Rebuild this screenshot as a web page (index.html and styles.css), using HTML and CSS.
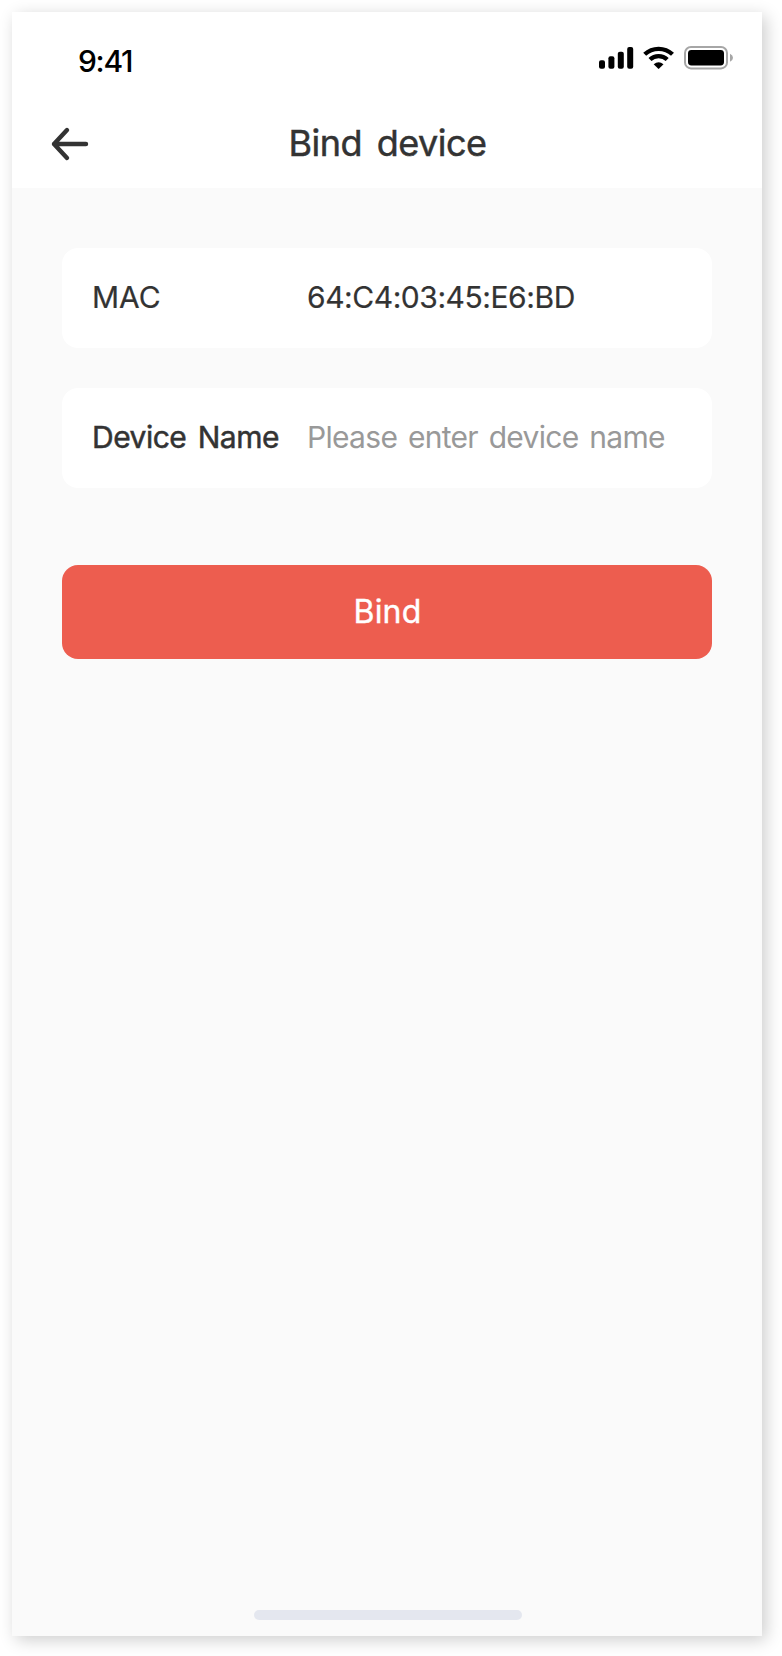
FILE: index.html
```
<!DOCTYPE html>
<html lang="en">
<head>
<meta charset="utf-8">
<title>Bind device</title>
<link rel="stylesheet" href="styles.css">
</head>
<body>
<main class="phone">
  <header class="header">
    <div class="status">
      <span class="time">9:41</span>
      <svg class="indicators" width="136" height="24" viewBox="0 0 136 24">
        <rect x="0" y="14.3" width="6" height="8.4" rx="2"/>
        <rect x="9.4" y="10.3" width="6" height="12.4" rx="2"/>
        <rect x="18.8" y="5.7" width="6" height="17" rx="2"/>
        <rect x="28.2" y="1" width="6" height="21.7" rx="2"/>
        <g fill="none" stroke="#000" stroke-width="4.3">
          <path d="M45.7 8.3A20.3 20.3 0 0 1 73.5 8.3"/>
          <path d="M51 13.5A12.4 12.4 0 0 1 68.2 13.5"/>
        </g>
        <path d="M54.7 18.2Q59.6 14.2 64.5 18.2L60.2 22.6Q59.6 23.2 59 22.6Z"/>
        <rect x="86" y="1" width="42" height="21.4" rx="6" fill="none" stroke="#a6a6a6" stroke-width="2"/>
        <rect x="89" y="4" width="36" height="15.4" rx="3.4"/>
        <path d="M131 7.7Q134 9 134 11.7Q134 14.4 131 15.7Z" fill="#a6a6a6"/>
      </svg>
    </div>
    <div class="nav">
      <svg class="back" width="40" height="36" viewBox="0 0 40 36" fill="none" stroke="#333" stroke-width="4.4" stroke-linecap="round" stroke-linejoin="round">
        <path d="M17 4L4 18L17 32M4 18H36"/>
      </svg>
      <h1 class="title">Bind device</h1>
    </div>
  </header>
  <section class="form">
    <div class="field"><span class="label mac">MAC</span><span class="value">64:C4:03:45:E6:BD</span></div>
    <div class="field"><span class="label">Device Name</span><span class="placeholder">Please enter device name</span></div>
    <button class="bind"><span class="bind-text">Bind</span></button>
  </section>
  <div class="home"></div>
</main>
</body>
</html>
```
FILE: styles.css
```
* { box-sizing: border-box; }
body {
  margin: 0;
  padding: 12px;
  height: 1656px;
  overflow: hidden;
  background: #fff;
  color: #333;
  font-family: Inter, "Liberation Sans", sans-serif;
}
.phone {
  display: flex;
  flex-direction: column;
  width: 750px;
  height: 1624px;
  background: #fafafa;
  box-shadow: 4px 4px 16px rgba(0, 0, 0, 0.2);
}
.header { height: 176px; background: #fff; }
.status {
  display: flex;
  justify-content: space-between;
  align-items: flex-start;
  height: 88px;
  padding: 31px 27px 0 66px;
}
.time {
  color: #000;
  font-size: 30px;
  line-height: 36px;
  font-weight: 500;
  letter-spacing: -1.3px;
}
.indicators { margin-top: 3px; }
.nav {
  display: grid;
  grid-template-columns: 80px 1fr 80px;
  align-items: center;
  height: 88px;
}
.back { margin-left: 38px; }
.title {
  margin: 0;
  padding: 0 0 2px 1px;
  font-size: 36px;
  line-height: 44px;
  font-weight: 400;
  -webkit-text-stroke: 0.5px #333;
  letter-spacing: -0.5px;
  word-spacing: 5px;
  text-align: center;
  white-space: nowrap;
}
.form {
  display: flex;
  flex-direction: column;
  gap: 40px;
  padding: 60px 50px 0;
}
.field {
  display: flex;
  align-items: center;
  height: 100px;
  padding: 0 30px 2px;
  border-radius: 16px;
  background: #fff;
  font-size: 30px;
  white-space: nowrap;
}
.label {
  flex: 0 0 215px;
  font-weight: 400;
  -webkit-text-stroke: 0.5px #333;
  letter-spacing: -0.5px;
  word-spacing: 3.5px;
}
.mac { -webkit-text-stroke-width: 0.2px; letter-spacing: 0; }
.value { letter-spacing: -0.45px; -webkit-text-stroke: 0.2px #333; }
.placeholder {
  color: #999;
  font-weight: 400;
  letter-spacing: -0.7px;
  word-spacing: 3px;
}
.bind {
  height: 94px;
  margin-top: 37px;
  padding: 0 0 1px 1px;
  border: 0;
  border-radius: 16px;
  background: #ed5d4f;
  color: #fff;
  font: 400 32px Inter, "Liberation Sans", sans-serif;
  -webkit-text-stroke: 0.4px #fff;
  letter-spacing: 0.2px;
}
.home {
  width: 268px;
  height: 10px;
  margin: auto 0 16px 242px;
  border-radius: 5px;
  background: #e4e7ef;
}
```
